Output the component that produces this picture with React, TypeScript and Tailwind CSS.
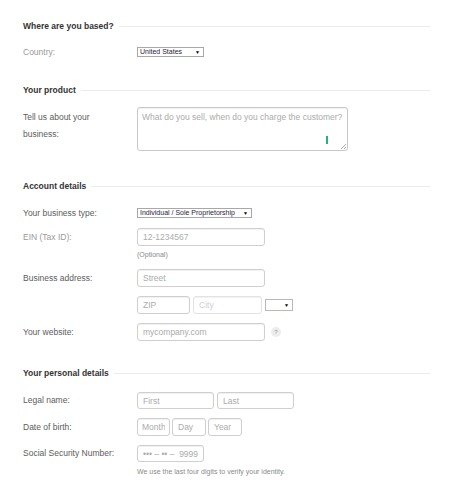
import React from 'react'

const font = { fontFamily: '"Liberation Sans", Arial, sans-serif' }

function Heading({ children }: { children: React.ReactNode }) {
  return (
    <div className="flex items-center h-[12px]">
      <span className="text-[8.5px] leading-[12px] font-bold text-[#333] pr-[5px] whitespace-nowrap">{children}</span>
      <div className="flex-1 h-px bg-[#ebebeb]" />
    </div>
  )
}

function Label({ children, light }: { children: React.ReactNode; light?: boolean }) {
  return (
    <div className={`w-[114px] shrink-0 text-[8.5px] leading-[17px] ${light ? 'text-[#9a9a9a]' : 'text-[#5c5c5c]'}`}>
      {children}
    </div>
  )
}

function Select({ text, w }: { text: string; w: string }) {
  return (
    <div className={`${w} h-[10px] border border-[#a8a8a8] bg-white flex items-center justify-between pl-[2px] pr-[3px]`}>
      <span className="text-[7px] leading-[8px] text-[#2a1a3a] whitespace-nowrap">{text}</span>
      <span className="text-[5px] leading-[8px] text-black">▼</span>
    </div>
  )
}

function Input({ w, h = 'h-[18px]', ph, faded, px = 'px-[5px]' }: { w: string; h?: string; ph: string; faded?: boolean; px?: string }) {
  return (
    <input
      readOnly
      placeholder={ph}
      className={`${w} ${h} ${px} rounded-[3px] border ${faded ? 'border-[#e3e3e3] placeholder:text-[#d0d0d0]' : 'border-[#cfcfcf] placeholder:text-[#ababab]'} bg-white text-[8.5px] shadow-[inset_0_1px_1px_rgba(0,0,0,0.06)] outline-none`}
      style={font}
    />
  )
}

export default function App() {
  return (
    <div className="w-[452px] h-[490px] bg-white overflow-hidden" style={font}>
      <div className="pl-[23px] w-[430px] pt-[20px] flex flex-col">
        <Heading>Where are you based?</Heading>

        <div className="flex items-center mt-[15px] h-[10px]">
          <Label light>Country:</Label>
          <Select text="United States" w="w-[67px]" />
        </div>

        <div className="mt-[27px]">
          <Heading>Your product</Heading>
        </div>

        <div className="flex mt-[11px]">
          <div className="pt-[2px]">
            <Label>
              Tell us about your
              <br />
              business:
            </Label>
          </div>
          <div className="relative w-[211px] h-[44px] rounded-[3px] border border-[#c8c8c8] bg-white shadow-[inset_0_1px_1px_rgba(0,0,0,0.06)] px-[4px] pt-[4px] text-[8.5px] leading-[11px] text-[#ababab] whitespace-nowrap">
            What do you sell, when do you charge the customer?
            <div className="absolute left-[188px] top-[28px] w-[2px] h-[8px] bg-[#22b573]" />
            <svg className="absolute right-[1px] bottom-[1px]" width="6" height="6" viewBox="0 0 6 6">
              <path d="M6 1L1 6M6 4L4 6" stroke="#999" strokeWidth="0.8" />
            </svg>
          </div>
        </div>

        <div className="mt-[29px]">
          <Heading>Account details</Heading>
        </div>

        <div className="flex items-center mt-[16px] h-[10px]">
          <Label>Your business type:</Label>
          <Select text="Individual / Sole Proprietorship" w="w-[115px]" />
        </div>

        <div className="flex items-center mt-[10px]">
          <Label light>EIN (Tax ID):</Label>
          <Input w="w-[128px]" ph="12-1234567" />
        </div>
        <div className="pl-[114px] mt-[4px] text-[7px] leading-[10px] text-[#8a8a8a]">(Optional)</div>

        <div className="flex items-center mt-[9px]">
          <Label>Business address:</Label>
          <Input w="w-[128px]" ph="Street" />
        </div>

        <div className="flex items-center mt-[9px] pl-[114px] gap-[3px]">
          <Input w="w-[53px]" ph="ZIP" />
          <Input w="w-[69px]" ph="City" faded />
          <div className="w-[28px] h-[12px] border border-[#b8b8b8] bg-white flex items-center justify-end pr-[3px]">
            <span className="text-[5px] leading-[8px] text-black">▼</span>
          </div>
        </div>

        <div className="flex items-center mt-[9px]">
          <Label>Your website:</Label>
          <Input w="w-[128px]" ph="mycompany.com" />
          <div className="ml-[6px] w-[10px] h-[10px] rounded-full bg-[#ececec] flex items-center justify-center text-[6px] leading-none text-[#999]">
            ?
          </div>
        </div>

        <div className="mt-[26px]">
          <Heading>Your personal details</Heading>
        </div>

        <div className="flex items-center mt-[13px]">
          <Label>Legal name:</Label>
          <div className="flex gap-[3px]">
            <Input w="w-[77px]" h="h-[17px]" ph="First" />
            <Input w="w-[77px]" h="h-[17px]" ph="Last" />
          </div>
        </div>

        <div className="flex items-center mt-[9px]">
          <Label>Date of birth:</Label>
          <div className="flex gap-[2px]">
            <Input w="w-[33px]" ph="Month" px="px-[4px]" />
            <Input w="w-[34px]" ph="Day" />
            <Input w="w-[34px]" ph="Year" />
          </div>
        </div>

        <div className="flex items-center mt-[9px]">
          <Label>Social Security Number:</Label>
          <Input w="w-[67px]" h="h-[17px]" ph="••• – •• –  9999" />
        </div>
        <div className="pl-[114px] mt-[5px] text-[7px] leading-[10px] text-[#8a8a8a]">
          We use the last four digits to verify your identity.
        </div>
      </div>
    </div>
  )
}
